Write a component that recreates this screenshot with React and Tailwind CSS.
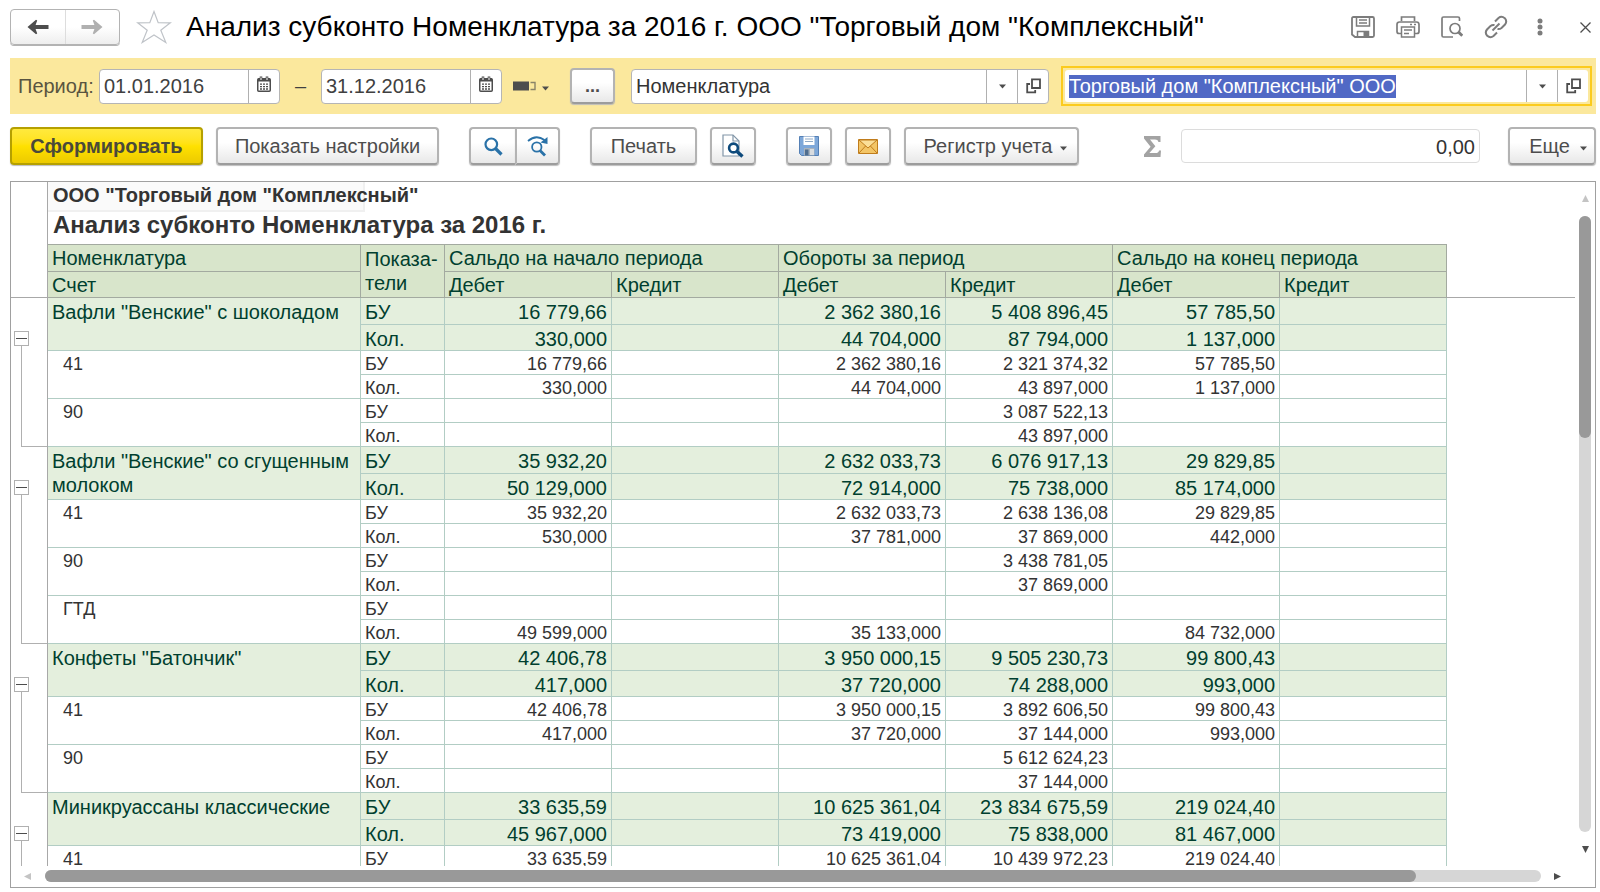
import { useEffect, useRef } from "react";

const groups = [
  {
    name: 'Вафли "Венские" с шоколадом',
    rows: [
      ["БУ", "16 779,66", "", "2 362 380,16", "5 408 896,45", "57 785,50", ""],
      ["Кол.", "330,000", "", "44 704,000", "87 794,000", "1 137,000", ""],
    ],
    accounts: [
      {
        code: "41",
        rows: [
          ["БУ", "16 779,66", "", "2 362 380,16", "2 321 374,32", "57 785,50", ""],
          ["Кол.", "330,000", "", "44 704,000", "43 897,000", "1 137,000", ""],
        ],
      },
      {
        code: "90",
        rows: [
          ["БУ", "", "", "", "3 087 522,13", "", ""],
          ["Кол.", "", "", "", "43 897,000", "", ""],
        ],
      },
    ],
  },
  {
    name: 'Вафли "Венские" со сгущенным молоком',
    rows: [
      ["БУ", "35 932,20", "", "2 632 033,73", "6 076 917,13", "29 829,85", ""],
      ["Кол.", "50 129,000", "", "72 914,000", "75 738,000", "85 174,000", ""],
    ],
    accounts: [
      {
        code: "41",
        rows: [
          ["БУ", "35 932,20", "", "2 632 033,73", "2 638 136,08", "29 829,85", ""],
          ["Кол.", "530,000", "", "37 781,000", "37 869,000", "442,000", ""],
        ],
      },
      {
        code: "90",
        rows: [
          ["БУ", "", "", "", "3 438 781,05", "", ""],
          ["Кол.", "", "", "", "37 869,000", "", ""],
        ],
      },
      {
        code: "ГТД",
        rows: [
          ["БУ", "", "", "", "", "", ""],
          ["Кол.", "49 599,000", "", "35 133,000", "", "84 732,000", ""],
        ],
      },
    ],
  },
  {
    name: 'Конфеты "Батончик"',
    rows: [
      ["БУ", "42 406,78", "", "3 950 000,15", "9 505 230,73", "99 800,43", ""],
      ["Кол.", "417,000", "", "37 720,000", "74 288,000", "993,000", ""],
    ],
    accounts: [
      {
        code: "41",
        rows: [
          ["БУ", "42 406,78", "", "3 950 000,15", "3 892 606,50", "99 800,43", ""],
          ["Кол.", "417,000", "", "37 720,000", "37 144,000", "993,000", ""],
        ],
      },
      {
        code: "90",
        rows: [
          ["БУ", "", "", "", "5 612 624,23", "", ""],
          ["Кол.", "", "", "", "37 144,000", "", ""],
        ],
      },
    ],
  },
  {
    name: "Миникруассаны классические",
    rows: [
      ["БУ", "33 635,59", "", "10 625 361,04", "23 834 675,59", "219 024,40", ""],
      ["Кол.", "45 967,000", "", "73 419,000", "75 838,000", "81 467,000", ""],
    ],
    accounts: [
      {
        code: "41",
        rows: [["БУ", "33 635,59", "", "10 625 361,04", "10 439 972,23", "219 024,40", ""]],
      },
    ],
  },
];

const periods = ["Сальдо на начало периода", "Обороты за период", "Сальдо на конец периода"];

/* ---------- icons ---------- */

const ArrowIcon = ({ className }) => (
  <svg className={className} width="22" height="16" viewBox="0 0 22 16" fill="currentColor">
    <path d="M0.5 8 L9 0.8 L10.2 1.6 L8.6 6 H21.5 V10 H8.6 L10.2 14.4 L9 15.2 Z" />
  </svg>
);

const StarIcon = () => (
  <svg width="36" height="34" viewBox="0 0 36 34" fill="#fff" stroke="#bfc3c8" strokeWidth="1.2">
    <path d="M18 1.5 L22.2 12.6 L34.4 12.8 L24.8 20.2 L29.8 32.4 L18 25 L6.2 32.4 L11.2 20.2 L1.6 12.8 L13.8 12.6 Z" />
  </svg>
);

const SaveIcon = () => (
  <svg width="24" height="22" viewBox="0 0 24 22" fill="none" stroke="#7c7c7c" strokeWidth="1.8">
    <path d="M2.5 1 H21.5 Q23 1 23 2.5 V19.5 Q23 21 21.5 21 H4 L1 18.5 V2.5 Q1 1 2.5 1 Z" />
    <path d="M5.5 1 V10 H18.5 V1 M8 4 H16 M8 7 H16" strokeWidth="1.5" />
    <path d="M6.5 21 V15.5 H17.5 V21" strokeWidth="1.5" />
    <path d="M12.5 16 H17 V20 H12.5 Z" fill="#7c7c7c" stroke="none" />
  </svg>
);

const PrintIcon = () => (
  <svg width="24" height="22" viewBox="0 0 24 22" fill="none" stroke="#7c7c7c" strokeWidth="1.7">
    <path d="M5.5 5 V1 H18.5 V5" />
    <path d="M5 17.5 H3 Q1 17.5 1 15.5 V8.5 Q1 6 3.5 6 H20.5 Q23 6 23 8.5 V15.5 Q23 17.5 21 17.5 H19" />
    <path d="M5.5 11 H18.5 V21 H5.5 Z M8 14 H16 M8 17.5 H13" strokeWidth="1.5" />
    <path d="M14 8.5 H16 M18 8.5 H20" />
  </svg>
);

const PreviewIcon = () => (
  <svg width="22" height="22" viewBox="0 0 22 22" fill="none" stroke="#7c7c7c" strokeWidth="1.7">
    <path d="M12 21 H2.5 Q1 21 1 19.5 V2.5 Q1 1 2.5 1 H17 Q18.5 1 18.5 2.5 V5" />
    <circle cx="14" cy="12.5" r="5" />
    <path d="M17.5 16 L21.3 19.8" strokeWidth="3" />
  </svg>
);

const LinkIcon = () => (
  <svg width="24" height="24" viewBox="0 0 24 24" fill="none" stroke="#7c7c7c" strokeWidth="2">
    <path d="M11 6.5 L14.5 3 Q17.5 0.5 20.8 3.2 Q23.5 6.4 21 9.5 L17.5 13 Q15.8 14.4 13.5 14" />
    <path d="M10.5 10 Q8.2 9.6 6.5 11 L3 14.5 Q0.5 17.6 3.2 20.8 Q6.4 23.5 9.5 21 L13 17.5" />
    <path d="M8.5 15.5 L15.5 8.5" />
  </svg>
);

const DotsIcon = () => (
  <svg width="6" height="18" viewBox="0 0 6 18" fill="#7c7c7c">
    <circle cx="3" cy="3" r="2.5" />
    <circle cx="3" cy="9" r="2.5" />
    <circle cx="3" cy="15" r="2.5" />
  </svg>
);

const CloseIcon = () => (
  <svg width="11" height="11" viewBox="0 0 11 11" stroke="#4d4d4d" strokeWidth="1.3">
    <path d="M0.5 0.5 L10.5 10.5 M10.5 0.5 L0.5 10.5" />
  </svg>
);

const CalendarIcon = () => (
  <svg className="mb-1" width="14" height="16" viewBox="0 0 14 16" fill="none">
    <rect x="0.75" y="2.75" width="12.5" height="12.5" rx="1" fill="#fff" stroke="#4d4d4d" strokeWidth="1.5" />
    <path d="M1 2.5 H13 V5.5 H1 Z" fill="#4d4d4d" />
    <path d="M4 0.5 V3.5 M10 0.5 V3.5" stroke="#4d4d4d" strokeWidth="2.6" />
    <path d="M4 1.5 V4 M10 1.5 V4" stroke="#fff" strokeWidth="1" />
    <path d="M3 8.2 H11 M3 10.6 H11 M3 13 H11" stroke="#4d4d4d" strokeWidth="1.3" strokeDasharray="2 1" />
  </svg>
);

const PeriodIcon = () => (
  <svg width="23" height="10" viewBox="0 0 23 10" fill="none">
    <path d="M0 0.5 H16 V9.5 H0 Z" fill="#4d4d4d" />
    <path d="M17.5 1.5 H22 V8.5 H17.5" stroke="#8a8468" strokeWidth="1.4" />
  </svg>
);

const Caret = ({ className }) => (
  <svg className={className} width="7" height="5" viewBox="0 0 7 5" fill="#4d4d4d">
    <path d="M0 0.5 H7 L3.5 4.5 Z" />
  </svg>
);

const OpenIcon = () => (
  <svg width="15" height="16" viewBox="0 0 15 16" fill="none" stroke="#4d4d4d" strokeWidth="1.8">
    <path d="M6 1.4 H14 V10 H6 Z" />
    <path d="M4 6 H1.2 V14.4 H9.2 V12" />
  </svg>
);

const SearchIcon = () => (
  <svg width="19" height="19" viewBox="0 0 19 19" fill="none" stroke="#2a72a8">
    <circle cx="7.3" cy="7.3" r="5.8" strokeWidth="2.2" />
    <path d="M11.5 11.5 L17.5 17.5" strokeWidth="3.2" />
  </svg>
);

const SearchNextIcon = () => (
  <svg width="22" height="21" viewBox="0 0 22 21" fill="none" stroke="#2a72a8">
    <path d="M1 5 Q9 -2 17.5 4" strokeWidth="1.8" />
    <path d="M20.5 1 V8 L13.5 6.6 Z" fill="#2a72a8" stroke="none" />
    <circle cx="9.8" cy="11" r="4.7" strokeWidth="1.8" />
    <path d="M13 14.5 L18 19.5" strokeWidth="2.8" />
  </svg>
);

const PagePreviewIcon = () => (
  <svg width="22" height="24" viewBox="0 0 22 24" fill="none">
    <path d="M1 1 H11 L17 7 V22 H1 Z" fill="#fff" stroke="#8296a8" strokeWidth="1.2" />
    <path d="M11 1 V7 H17" stroke="#8296a8" strokeWidth="1.2" />
    <circle cx="11.5" cy="14" r="4.4" fill="#fff" stroke="#0d4a7c" strokeWidth="2.6" />
    <path d="M15 17.5 L20.5 22.5" stroke="#0d4a7c" strokeWidth="3.4" />
  </svg>
);

const DisketteIcon = () => (
  <svg width="20" height="20" viewBox="0 0 20 20">
    <path d="M0.5 0.5 H19.5 V19.5 H2.5 L0.5 17.5 Z" fill="#7da7d9" stroke="#5580b5" />
    <path d="M4.5 0.5 H15.5 V9 H4.5 Z" fill="#fff" />
    <path d="M6 3 H14 M6 5.5 H14" stroke="#8fa9c6" />
    <path d="M5 12 H15.5 V19.5 H5 Z" fill="#a9b3bd" />
    <path d="M6 13.5 H9.5 V19.5 H6 Z" fill="#4f6d8f" />
    <path d="M11 13 H15 V19 H11 Z" fill="#d9dcdf" />
  </svg>
);

const MailIcon = () => (
  <svg width="20" height="15" viewBox="0 0 20 15" fill="none" stroke="#c07d1c">
    <path d="M0.5 0.5 H19.5 V14.5 H0.5 Z" fill="#f3c566" />
    <path d="M1 1 L10 9 L19 1 Z" fill="#fbdf98" />
    <path d="M1 14 L7.6 7 M19 14 L12.4 7" />
  </svg>
);

const SigmaIcon = () => (
  <svg width="17" height="21" viewBox="0 0 17 21" fill="#a3a3a3">
    <path d="M0 0 H16.5 V6 H14.5 Q14 3.6 11 3.6 H6 L11.4 10.2 L5.4 17 H11.5 Q14.5 17 15 14.4 H17 L16.5 21 H0 V18.6 L6.6 10.8 L0 2.6 Z" />
  </svg>
);

const Triangle = ({ d, color }) => (
  <svg width="7" height="7" viewBox="0 0 7 7" fill={color}>
    <path d={d} />
  </svg>
);

/* ---------- controls ---------- */

const buttonLook =
  "border-2 border-[#b3b3b3] border-b-[#9c9c9c] rounded-[4px] bg-linear-to-b from-white from-40% to-[#e8e8e8] shadow-[0_1px_1px_#bdbdbd] text-[#4d4d4d]";

const ToolButton = ({ className = "", children, ...props }) => (
  <button type="button" className={`${buttonLook} h-[38px] shrink-0 flex items-center justify-center whitespace-nowrap ${className}`} {...props}>
    {children}
  </button>
);

const FieldButton = ({ label, children }) => (
  <button type="button" aria-label={label} className="w-[31px] shrink-0 flex items-center justify-center border-l border-[#b0b0b0]">
    {children}
  </button>
);

const DateField = ({ id, label, value }) => (
  <div className="flex w-[181px] h-[35px] shrink-0 bg-white border border-[#b5b5b5] rounded-[4px] overflow-hidden">
    <input id={id} aria-label={label} defaultValue={value} className="flex-1 min-w-0 pl-1 text-[#404040] outline-none" />
    <FieldButton label="Выбрать дату">
      <CalendarIcon />
    </FieldButton>
  </div>
);

const Header = () => (
  <header className="flex items-center h-9 shrink-0">
    <div className="flex w-[110px] h-9 shrink-0 border border-[#b3b3b3] rounded-[4px] bg-linear-to-b from-white from-50% to-[#eeeeee] shadow-[0_1px_0_#b3b3b3]">
      <button type="button" aria-label="Назад" className="flex-1 flex items-center justify-center border-r border-[#dddddd]">
        <ArrowIcon className="text-[#4d4d4d]" />
      </button>
      <button type="button" aria-label="Вперед" className="flex-1 flex items-center justify-center">
        <ArrowIcon className="text-[#b0b0b0] rotate-180" />
      </button>
    </div>
    <button type="button" aria-label="В избранное" className="ml-4">
      <StarIcon />
    </button>
    <h1 className="ml-[14px] flex-1 text-[28px] leading-9 text-black whitespace-nowrap">
      Анализ субконто Номенклатура за 2016 г. ООО "Торговый дом "Комплексный"
    </h1>
    <div className="flex items-center gap-[21px] pr-[5px]">
      <button type="button" aria-label="Сохранить"><SaveIcon /></button>
      <button type="button" aria-label="Печать"><PrintIcon /></button>
      <button type="button" aria-label="Просмотр"><PreviewIcon /></button>
      <button type="button" aria-label="Ссылка"><LinkIcon /></button>
      <button type="button" aria-label="Меню" className="pl-2 pr-4"><DotsIcon /></button>
      <button type="button" aria-label="Закрыть"><CloseIcon /></button>
    </div>
  </header>
);

const PeriodBar = () => {
  const orgRef = useRef(null);

  useEffect(() => {
    orgRef.current.focus();
    orgRef.current.select();
  }, []);

  return (
    <div className="mt-[13px] flex items-center h-14 shrink-0 bg-[#fbe89d] pl-2 pr-1">
      <label htmlFor="from" className="w-[81px] shrink-0 text-[#595440]">Период:</label>
      <DateField id="from" label="Период:" value="01.01.2016" />
      <span className="w-[41px] shrink-0 text-center text-[#404040]">–</span>
      <DateField id="to" label="Конец периода" value="31.12.2016" />
      <button type="button" aria-label="Вид периода" className="ml-[11px] shrink-0 flex items-center gap-1.5">
        <PeriodIcon />
        <Caret className="mt-1" />
      </button>
      <button type="button" className={`${buttonLook} ml-[21px] w-[45px] h-9 shrink-0 font-bold text-[18px] leading-6`}>...</button>
      <div className="ml-4 flex w-[418px] h-[35px] bg-white border border-[#b5b5b5] rounded-[4px] overflow-hidden">
        <input aria-label="Вид субконто" defaultValue="Номенклатура" className="flex-1 min-w-0 pl-1 text-[#333333] outline-none" />
        <FieldButton label="Выбрать"><Caret /></FieldButton>
        <FieldButton label="Открыть"><OpenIcon /></FieldButton>
      </div>
      <div className="ml-3 flex-1 min-w-0 h-10 border-2 border-[#fbcb1e] p-0.5">
        <div className="flex h-full bg-white rounded-[3px]">
          <input
            ref={orgRef}
            aria-label="Организация"
            defaultValue={'Торговый дом "Комплексный" ООО'}
            className="flex-1 min-w-0 pl-1 text-[#333333] outline-none selection:bg-[#5169c5] selection:text-white"
          />
          <FieldButton label="Выбрать"><Caret /></FieldButton>
          <FieldButton label="Открыть"><OpenIcon /></FieldButton>
        </div>
      </div>
    </div>
  );
};

const Toolbar = () => (
  <div className="mt-[13px] flex items-center shrink-0">
    <button
      type="button"
      className="w-[193px] h-[38px] shrink-0 border-2 border-[#b5a000] rounded-[4px] bg-linear-to-b from-[#ffe93d] via-[#ffe100] to-[#ecca00] shadow-[0_1px_1px_#bdbdbd] font-bold text-[#4a4a3a]"
    >
      Сформировать
    </button>
    <ToolButton className="ml-[13px] w-[223px]">Показать настройки</ToolButton>
    <div className="ml-[30px] flex shrink-0">
      <ToolButton aria-label="Найти" className="w-[46px] rounded-r-none border-r-0"><SearchIcon /></ToolButton>
      <ToolButton aria-label="Найти далее" className="w-[45px] rounded-l-none"><SearchNextIcon /></ToolButton>
    </div>
    <ToolButton className="ml-[30px] w-[107px]">Печать</ToolButton>
    <ToolButton aria-label="Предварительный просмотр" className="ml-[13px] w-[46px]"><PagePreviewIcon /></ToolButton>
    <ToolButton aria-label="Сохранить" className="ml-[30px] w-[46px]"><DisketteIcon /></ToolButton>
    <ToolButton aria-label="Отправить" className="ml-[13px] w-[46px]"><MailIcon /></ToolButton>
    <ToolButton className="ml-[13px] w-[175px] pl-2 gap-2">
      Регистр учета
      <Caret className="mt-1" />
    </ToolButton>
    <label htmlFor="sum" aria-label="Сумма" className="ml-auto"><SigmaIcon /></label>
    <input
      id="sum"
      readOnly
      value="0,00"
      className="ml-5 w-[299px] h-[34px] border border-[#dcdcdc] rounded-[4px] pr-1 pt-0.5 text-right text-[#333333] outline-none"
    />
    <ToolButton className="ml-7 w-[88px] pl-3 gap-2.5">
      Еще
      <Caret className="mt-1" />
    </ToolButton>
  </div>
);

/* ---------- report ---------- */

const headCell =
  "border-r border-b border-[#a3aaa0] bg-[#d8e5cb] text-left align-top font-normal pl-1 pt-0.5 leading-[22px] whitespace-nowrap";

const Row = ({ cells, main, first, children, lead }) => {
  const look = main
    ? "bg-[#e4efdd] text-[#003f2f] text-[20px] leading-[22px]"
    : "bg-white text-[#333333] text-[18px] leading-[20px]";
  return (
    <tr className={main ? (first ? "h-[27px]" : "h-[26px]") : "h-6"}>
      {lead}
      {children}
      {cells.map((value, i) => (
        <td
          key={i}
          className={`${look} border-r border-b border-[#b2cdc4] align-top pt-[3px] px-1 whitespace-nowrap ${i === 0 ? "text-left" : "text-right"}`}
        >
          {value}
        </td>
      ))}
    </tr>
  );
};

const Group = ({ group }) => {
  const total = group.rows.length + group.accounts.reduce((sum, a) => sum + a.rows.length, 0);
  return (
    <tbody>
      {group.rows.map((cells, i) => (
        <Row
          key={i}
          main
          first={i === 0}
          cells={cells}
          lead={
            i === 0 && (
              <td rowSpan={total} className="relative border-r border-[#a8a8a8]">
                <div className="absolute left-[10px] right-0 top-10 bottom-0 border-l border-b border-[#b0b0b0]" />
                <button
                  type="button"
                  aria-label="Свернуть"
                  className="absolute left-[3px] top-[33px] size-[15px] flex items-center justify-center border border-[#b0b0b0] bg-white"
                >
                  <span className="w-[11px] h-px bg-[#4d4d4d]" />
                </button>
              </td>
            )
          }
        >
          {i === 0 && (
            <td
              rowSpan={group.rows.length}
              className="border-r border-b border-[#b2cdc4] bg-[#e4efdd] text-[#003f2f] align-top pl-1 pt-0.5 text-[20px] leading-6"
            >
              {group.name}
            </td>
          )}
        </Row>
      ))}
      {group.accounts.map((account) =>
        account.rows.map((cells, i) => (
          <Row key={account.code + i} cells={cells}>
            {i === 0 && (
              <td
                rowSpan={account.rows.length}
                className="border-r border-b border-[#b2cdc4] text-[#333333] align-top pl-[15px] pt-[3px] text-[18px] leading-[20px]"
              >
                {account.code}
              </td>
            )}
          </Row>
        ))
      )}
    </tbody>
  );
};

const Report = () => (
  <div className="flex-1 min-w-0 overflow-hidden">
    <div className="ml-9 h-[62px] border-l border-[#a8a8a8] text-[#333333] font-bold whitespace-nowrap">
      <div className="w-[317px] h-[30px] border-r-2 border-b-2 border-[#f0f0f0] bg-[#fafafa] pl-[5px] leading-[26px]">
        ООО "Торговый дом "Комплексный"
      </div>
      <h2 className="pl-[5px] text-[24px] leading-[26px]">Анализ субконто Номенклатура за 2016 г.</h2>
    </div>
    <table className="w-full table-fixed border-separate border-spacing-0">
      <colgroup>
        <col className="w-[37px]" />
        <col className="w-[313px]" />
        <col className="w-[84px]" />
        <col className="w-[167px]" />
        <col className="w-[167px]" />
        <col className="w-[167px]" />
        <col className="w-[167px]" />
        <col className="w-[167px]" />
        <col className="w-[167px]" />
        <col />
      </colgroup>
      <thead className="text-[#003f2f]">
        <tr className="h-7">
          <td rowSpan={2} className="border-r border-b border-[#a8a8a8]" />
          <th className={`${headCell} border-t`}>Номенклатура</th>
          <th rowSpan={2} className={`${headCell} border-t`}>
            <span className="block leading-6">
              Показа-
              <br />
              тели
            </span>
          </th>
          {periods.map((title) => (
            <th key={title} colSpan={2} className={`${headCell} border-t`}>{title}</th>
          ))}
          <td rowSpan={2} className="border-b border-[#a8a8a8]" />
        </tr>
        <tr className="h-[26px]">
          <th className={headCell}>Счет</th>
          {periods.flatMap((title) => [
            <th key={title + "d"} className={headCell}>Дебет</th>,
            <th key={title + "k"} className={headCell}>Кредит</th>,
          ])}
        </tr>
      </thead>
      {groups.map((group) => (
        <Group key={group.name} group={group} />
      ))}
    </table>
  </div>
);

const VerticalScroll = () => (
  <div className="w-5 shrink-0 flex flex-col items-center pt-[13px] pb-[13px]">
    <Triangle d="M3.5 0 L7 7 H0 Z" color="#c4c4c4" />
    <div className="mt-[14px] mb-[14px] flex-1 w-3 rounded-full bg-[#d6d6d6]">
      <div className="h-[36%] rounded-full bg-[#999999]" />
    </div>
    <Triangle d="M0 0 H7 L3.5 7 Z" color="#4d4d4d" />
  </div>
);

const HorizontalScroll = () => (
  <div className="h-[21px] shrink-0 flex items-center pl-[13px] pr-[34px] pb-px">
    <Triangle d="M0 3.5 L7 0 V7 Z" color="#c4c4c4" />
    <div className="ml-[14px] mr-[13px] flex-1 h-3 rounded-full bg-[#d6d6d6]">
      <div className="w-11/12 h-full rounded-full bg-[#999999]" />
    </div>
    <Triangle d="M0 0 L7 3.5 L0 7 Z" color="#4d4d4d" />
  </div>
);

export default function App() {
  return (
    <div className="h-screen flex flex-col overflow-hidden bg-white pl-2.5 pr-1 pt-[9px] pb-1 text-[20px] leading-[23px] font-['Liberation_Sans',Arial,sans-serif]">
      <Header />
      <PeriodBar />
      <Toolbar />
      <main className="mt-4 flex-1 min-h-0 flex flex-col border border-[#a0a0a0]">
        <div className="flex-1 min-h-0 flex">
          <Report />
          <VerticalScroll />
        </div>
        <HorizontalScroll />
      </main>
    </div>
  );
}
